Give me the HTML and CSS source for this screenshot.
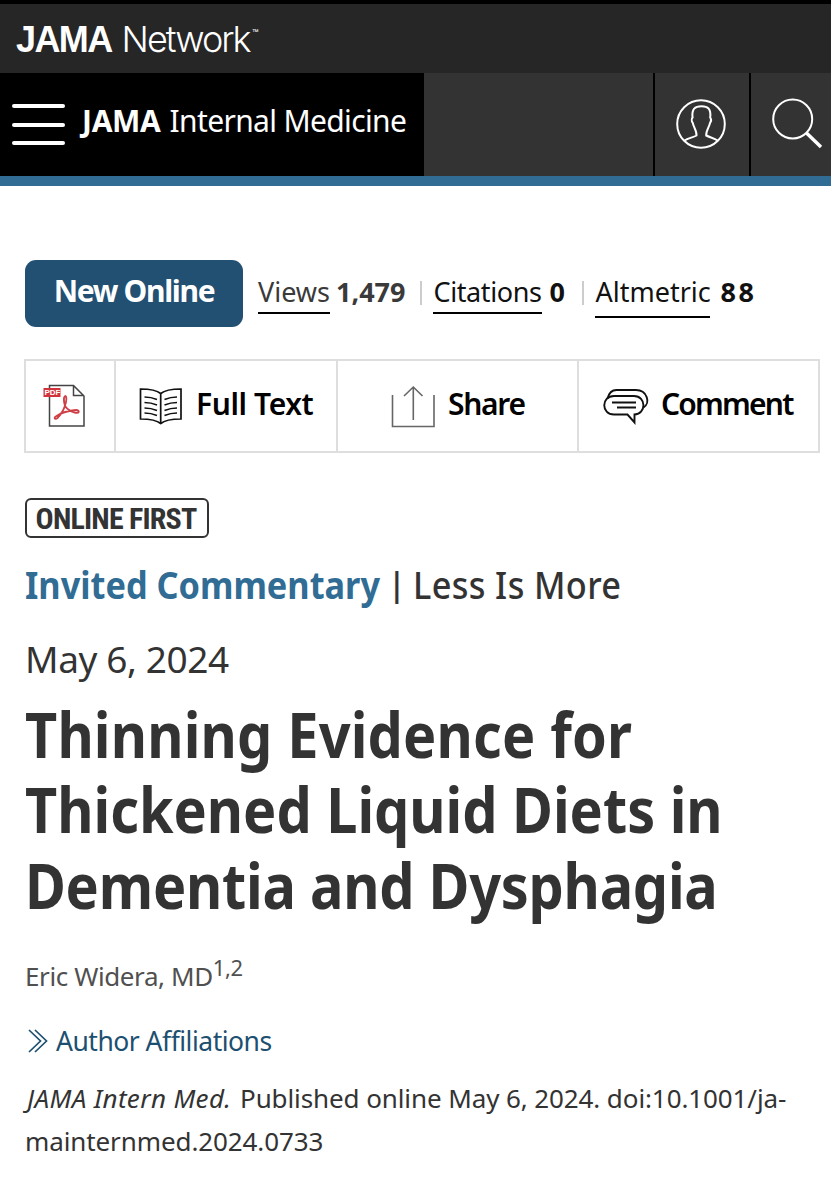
FILE: index.html
```html
<!DOCTYPE html>
<html lang="en">
<head>
    <meta charset="UTF-8">
    <meta name="viewport" content="width=device-width, initial-scale=1.0">
    <title>Thinning Evidence for Thickened Liquid Diets in Dementia and Dysphagia</title>
    <link rel="stylesheet" href="styles.css">
</head>
<body>
    <header>
        <div class="network-bar">
            <span class="network-bold">JAMA</span>
            <span class="network-light">Network</span>
            <span class="tm">™</span>
        </div>
        <nav class="journal-bar">
            <div class="journal">
                <div class="menu">
                    <span></span>
                    <span></span>
                    <span></span>
                </div>
                <div class="journal-name"><b>JAMA</b><span>Internal Medicine</span></div>
            </div>
            <a class="nav-icon user">
                <svg width="52" height="52" viewBox="0 0 52 52" fill="none" stroke="#fff" stroke-width="2">
                    <circle cx="26" cy="26" r="23.8"/>
                    <path d="M9.5 42.5 C13 40 18 39.5 21.5 37.5 C22 33 18.5 29 17.8 25 C16.4 23 16.6 20.5 17.6 19.5 C16.5 11 20 8.2 26.5 8.2 C33 8.2 36.2 11 35.2 19.5 C36.3 21 36.2 23.5 35 25 C34.3 29 30.700 33 31.2 37.5 C35 39.5 39.5 40 42.5 42.5"/>
                </svg>
            </a>
            <a class="nav-icon search">
                <svg width="52" height="52" viewBox="0 0 52 52" fill="none" stroke="#fff">
                    <circle cx="21.7" cy="21" r="19.5" stroke-width="2"/>
                    <path d="M35.5 35 L50 49" stroke-width="3.4"/>
                </svg>
            </a>
        </nav>
    </header>

    <main>
        <div class="metrics">
            <a class="new-online">New Online</a>
            <div class="metric views"><a>Views</a><b>1,479</b></div>
            <div class="metric citations"><a>Citations</a><b>0</b></div>
            <div class="metric altmetric"><a>Altmetric</a><b>88</b></div>
        </div>

        <div class="toolbar">
            <a class="tool pdf">
                <svg width="44" height="44" viewBox="0 0 44 44" fill="none">
                    <path d="M6.5 1.5 H30.5 L41 12 V42 H6.5 Z M30.5 1.5 V11.5 H41" stroke="#444" stroke-width="1.5"/>
                    <rect x="0.5" y="4" width="17" height="9" fill="#d2333b"/>
                    <text class="pdf-text" x="1.4" y="11.2">PDF</text>
                    <path d="M22 22 C18.5 10 25 9 23 18 C21.5 25 18 30.5 14.5 34 C11.5 36.5 10.5 33.5 13.5 32 C18 29 26 26.5 33 26 C37.5 26.5 36 29.5 32.5 28.8 C28 27.5 24 25 22 22 Z" stroke="#cf3f48" stroke-width="1.8"/>
                </svg>
            </a>
            <a class="tool full-text">
                <svg width="44" height="44" viewBox="0 0 44 44" fill="none" stroke="#111" stroke-width="1.7">
                    <path d="M21.7 9.5 C17 5.5 9 5 1.5 5 V35 C9 35 17 35.5 21.7 39.5 C26.5 35.5 34.5 35 42 35 V5 C34.5 5 26.5 5.5 21.7 9.5 V40"/>
                    <path d="M5.5 13 Q12 13 18 15.5 M5.5 18.5 Q12 18.5 18 21 M5.5 24 Q12 24 18 26.5 M5.5 29 Q12 29 18 31.5 M38 13 Q31.5 13 25.5 15.5 M38 18.5 Q31.5 18.5 25.5 21 M38 24 Q31.5 24 25.5 26.5 M38 29 Q31.5 29 25.5 31.5"/>
                </svg>
                <span>Full Text</span>
            </a>
            <a class="tool share">
                <svg width="44" height="44" viewBox="0 0 44 44" fill="none" stroke="#666" stroke-width="1.6">
                    <path d="M1.5 11 V42.5 H43 V11 M22.3 36 V3 M13 12 L22.3 3 L31.5 12"/>
                </svg>
                <span>Share</span>
            </a>
            <a class="tool comment">
                <svg width="46" height="44" viewBox="0 0 46 44" fill="none" stroke="#111" stroke-width="1.9">
                    <path d="M4.5 14.5 C6 8.5 9 6 13.5 6 H33 C44 6 48 19 40.5 23.5"/>
                    <path d="M11 12 H31 C43.5 12 43.5 30 31.5 30.5 V38.5 L24.5 30.5 H11 C-2 30.5 -2 12 11 12 Z"/>
                    <path d="M9 18.5 H33 M14 23.5 H33"/>
                </svg>
                <span>Comment</span>
            </a>
        </div>

        <div class="online-first">ONLINE FIRST</div>
        <div class="category"><a>Invited Commentary</a><span class="bar">|</span><span class="series">Less Is More</span></div>
        <div class="date">May 6, 2024</div>
        <h1><span class="wide">Thinning Evidence for</span><br>Thickened Liquid Diets in<br><span class="tight">Dementia and Dysphagia</span></h1>
        <div class="author">Eric Widera, MD<sup>1,2</sup></div>
        <a class="affiliations">
            <svg width="20" height="24" viewBox="0 0 20 24" fill="none" stroke="#1d5070" stroke-width="1.7">
                <path d="M1 1 L12.5 12 L1 23 M7 1 L18.5 12 L7 23"/>
            </svg>
            <span>Author Affiliations</span>
        </a>
        <p class="citation"><i>JAMA Intern Med.</i> Published online May 6, 2024. doi:10.1001/ja-<br>mainternmed.2024.0733</p>
    </main>
</body>
</html>
```
FILE: styles.css
```css
* {
    box-sizing: border-box;
}

body {
    margin: 0;
    font-family: "Noto Sans", sans-serif;
    color: #333;
    background-color: #fff;
}

svg {
    display: block;
    flex: none;
}

.network-bar {
    display: flex;
    height: 73px;
    padding-left: 16px;
    border-top: 4px solid #000;
    background-color: #262626;
    color: #fff;
    white-space: nowrap;
}

.network-bold {
    font: bold 36px/71px "Liberation Sans", sans-serif;
    letter-spacing: -1.6px;
}

.network-light {
    margin-left: 10px;
    font: 300 36px/71px "Inter", sans-serif;
    letter-spacing: -2px;
}

.tm {
    margin-left: 3px;
    font-size: 8px;
    line-height: 56px;
}

.journal-bar {
    display: flex;
    height: 113px;
    border-bottom: 10px solid #306c94;
    background-color: #333;
}

.journal {
    display: flex;
    width: 424px;
    margin-right: auto;
    padding-left: 12px;
    background-color: #000;
}

.menu {
    display: flex;
    flex-direction: column;
    justify-content: space-between;
    width: 53px;
    height: 41px;
    margin-top: 31px;
}

.menu span {
    height: 4px;
    border-radius: 2px;
    background-color: #fff;
}

.journal-name {
    margin-left: 17px;
    color: #fff;
    font-size: 30px;
    line-height: 96px;
    white-space: nowrap;
}

.journal-name b {
    letter-spacing: -0.3px;
}

.journal-name span {
    margin-left: 9px;
    letter-spacing: -0.65px;
}

.nav-icon {
    border-left: 2px solid #000;
}

.user {
    width: 96px;
    padding: 25px 0 0 20px;
}

.search {
    width: 82px;
    padding: 25px 0 0 20px;
}

main {
    padding: 74px 11px 0 25px;
}

.metrics {
    display: flex;
    height: 67px;
    color: #111;
    font-size: 27px;
    line-height: 42px;
}

.new-online {
    width: 218px;
    height: 67px;
    border-radius: 11px;
    background-color: #215073;
    color: #fff;
    font-size: 30px;
    font-weight: bold;
    letter-spacing: -1.3px;
    line-height: 61px;
    text-align: center;
}

.metric {
    display: flex;
    align-items: flex-start;
    padding-top: 11px;
}

.metric a {
    height: 43px;
    border-bottom: 2px solid #000;
}

.views {
    margin-left: 15px;
    color: #3a3a3a;
}

.views a {
    width: 72px;
    margin-right: 6px;
}

.citations a {
    width: 109px;
    margin-right: 7px;
    letter-spacing: -0.4px;
}

.citations b {
    width: 18px;
}

.metric.altmetric a {
    width: 115px;
    height: 47px;
    margin-right: 10px;
}

.altmetric b {
    letter-spacing: 2.5px;
}

.citations::before,
.altmetric::before {
    content: "";
    width: 2px;
    height: 24px;
    margin: 10px 11px 0 15px;
    background-color: #ccc;
}

.toolbar {
    display: grid;
    grid-template-columns: 90px 222px 241px 1fr;
    height: 94px;
    margin: 32px 0 0 -1px;
    border: 2px solid #dedede;
}

.tool {
    display: flex;
    align-items: center;
    border-right: 2px solid #dedede;
    color: #000;
    font-size: 30px;
    font-weight: 600;
}

.tool:last-child {
    border-right: none;
}

.tool span {
    padding-bottom: 5px;
}

.pdf {
    padding-left: 17px;
}

.pdf-text {
    fill: #fff;
    font: bold 8px "Liberation Sans", sans-serif;
}

.full-text {
    gap: 13px;
    padding-left: 23px;
    letter-spacing: -0.4px;
}

.share {
    gap: 13px;
    padding-left: 53px;
    letter-spacing: -1.3px;
}

.comment {
    gap: 12px;
    padding-left: 24px;
    letter-spacing: -1.8px;
}

.online-first {
    width: 184px;
    height: 40px;
    margin-top: 45px;
    border: 2.5px solid #333;
    border-radius: 6px;
    font: bold 30px/37px "Roboto", sans-serif;
    font-stretch: 75%;
    letter-spacing: -0.8px;
    text-align: center;
    text-indent: -2px;
}

.category {
    display: flex;
    margin-top: 22px;
    font-size: 37.5px;
    line-height: 50px;
    white-space: nowrap;
}

.category a {
    width: 366px;
    color: #306c94;
    font-weight: bold;
    transform: scaleX(0.915);
    transform-origin: left;
}

.category .bar {
    width: 22px;
    font-size: 32px;
    font-weight: 600;
    line-height: 48px;
    text-indent: -3px;
}

.series {
    font-weight: 550;
    letter-spacing: 0.4px;
    transform: scaleX(0.915);
    transform-origin: left;
}

.date {
    margin-top: 24px;
    font-size: 37px;
    letter-spacing: -0.4px;
    line-height: 50px;
}

/* slightly condensed headline */
h1 {
    margin: 13px 0 0;
    font-size: 62px;
    line-height: 75.4px;
    white-space: nowrap;
    transform: scaleX(0.9);
    transform-origin: left;
}

h1 .wide {
    letter-spacing: 0.22px;
}

h1 .tight {
    letter-spacing: -0.25px;
}

.author {
    margin-top: 33px;
    color: #505050;
    font-size: 26px;
    letter-spacing: -0.4px;
    line-height: 40px;
}

.author sup {
    font-size: 22px;
    line-height: 0;
    vertical-align: 10px;
}

.affiliations {
    display: flex;
    align-items: center;
    gap: 8px;
    margin-top: 25px;
    padding-left: 3px;
    color: #1d5070;
    font-size: 26.5px;
    letter-spacing: -0.5px;
    line-height: 40px;
}

.citation {
    margin: 16px 0 0;
    font-size: 26px;
    letter-spacing: -0.1px;
    line-height: 43px;
    white-space: nowrap;
}

.citation i {
    margin: 0 2px 0 2px;
    letter-spacing: 0.35px;
}
```
